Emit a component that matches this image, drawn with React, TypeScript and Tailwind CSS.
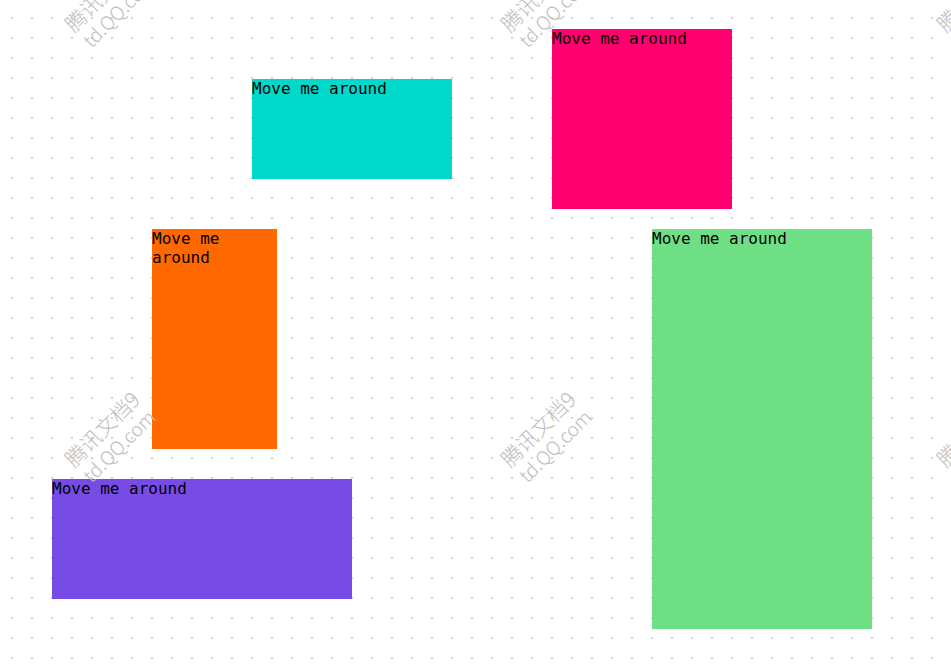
const boxes = [
  { id: "teal", cls: "left-[252px] top-[79px] w-[200px] h-[100px] bg-[#00d8ca]" },
  { id: "pink", cls: "left-[552px] top-[29px] w-[180px] h-[180px] bg-[#ff006e]" },
  { id: "orange", cls: "left-[152px] top-[229px] w-[125px] h-[220px] bg-[#ff6900]" },
  { id: "green", cls: "left-[652px] top-[229px] w-[220px] h-[400px] bg-[#6fdf86]" },
  { id: "purple", cls: "left-[52px] top-[479px] w-[300px] h-[120px] bg-[#774ce6]" },
];

const marks = [
  "left-[52px] top-[-21px]",
  "left-[488px] top-[-21px]",
  "left-[924px] top-[-21px]",
  "left-[52px] top-[414px]",
  "left-[488px] top-[414px]",
  "left-[924px] top-[414px]",
];

export default function App() {
  return (
    <div className="relative h-[668px] w-[951px] overflow-hidden bg-white bg-[radial-gradient(circle,#d2d2d2_0.8px,transparent_1px)] bg-[size:20px_20px] bg-[position:2px_8px]">
      {boxes.map((b) => (
        <div
          key={b.id}
          className={`absolute ${b.cls} font-['DejaVu_Sans_Mono',monospace] text-[16px] leading-[19px] text-black`}
        >
          Move me around
        </div>
      ))}
      {/* watermark */}
      {marks.map((m, i) => (
        <div
          key={i}
          className={`pointer-events-none absolute ${m} flex h-[46px] w-[116px] -rotate-45 select-none flex-col items-center font-['Noto_Sans_CJK_SC',sans-serif] font-light text-[#bdbdbd]`}
        >
          <span className="text-[21px] leading-[23px]">腾讯文档9</span>
          <span className="text-[19px] leading-[23px]">td.QQ.com</span>
        </div>
      ))}
    </div>
  );
}
